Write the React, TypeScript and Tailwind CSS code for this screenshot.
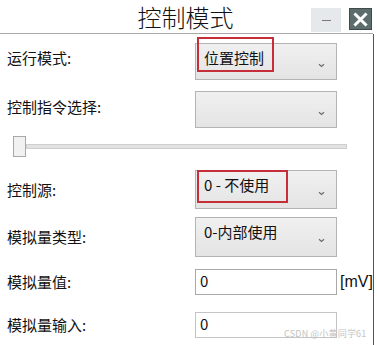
import React from 'react';

function Chevron() {
  return (
    <svg width="7" height="5" viewBox="0 0 7 5" className="absolute right-[11px] top-1/2 mt-[1px]">
      <path d="M1 1.2 L3.5 3.5 L6 1.2" fill="none" stroke="#6b6b6b" strokeWidth="1.2" />
    </svg>
  );
}

function Select({ value, h, mark }: { value?: string; h: string; mark?: string }) {
  return (
    <div className={`relative w-[142px] ${h} border border-[#b4b4b4] bg-gradient-to-b from-[#f0f0f0] to-[#e4e4e4]`}>
      {value && <div className="pl-[8px] pt-[3px] text-[15px] leading-[22px] text-[#111]">{value}</div>}
      <Chevron />
      {mark && <div className={`absolute left-[1px] border-2 border-[#c62f3a] ${mark}`} />}
    </div>
  );
}

function Label({ children, extra = '' }: { children: React.ReactNode; extra?: string }) {
  return <div className={`w-[195px] pl-[7px] text-[15px] text-[#111] ${extra}`}>{children}</div>;
}

export default function App() {
  return (
    <div className="relative w-[377px] h-[345px] bg-white overflow-hidden font-['Noto_Sans_CJK_SC','Liberation_Sans',sans-serif]">
      {/* Header */}
      <div className="relative h-[34px] w-[373px] border-b border-[#a8a8a8] flex items-center justify-center">
        <span className="text-[24px] leading-none font-light text-[#111] -ml-[2px]">控制模式</span>
        <div className="absolute right-[1px] top-[8px] flex items-start gap-[8px]">
          <div className="w-[30px] h-[24px] bg-[#e6e9ec] flex items-center justify-center">
            <div className="w-[9px] h-[1px] bg-[#7a7a7a]" />
          </div>
          <div className="w-[23px] h-[22px] bg-[#5d6d6c] border border-[#3f4a4a] flex items-center justify-center">
            <svg width="15" height="15" viewBox="0 0 15 15">
              <path d="M2.5 2.5 L12.5 12.5 M12.5 2.5 L2.5 12.5" stroke="#fff" strokeWidth="3" strokeLinecap="square" />
            </svg>
          </div>
        </div>
      </div>

      {/* Body */}
      <div className="w-[374px] h-[311px] border-r border-[#555]">
        <div className="flex items-center pt-[9px]">
          <Label extra="-mt-[6px]">运行模式:</Label>
          <Select value="位置控制" h="h-[37px]" mark="-top-[7px] w-[77px] h-[35px]" />
        </div>

        <div className="flex items-center mt-[11px]">
          <Label extra="-mt-[4px]">控制指令选择:</Label>
          <Select h="h-[37px]" />
        </div>

        <div className="flex items-center mt-[8px] pl-[13px] h-[21px]">
          <div className="w-[13px] h-[21px] border border-[#a8a8a8] bg-[#f1f1f1]" />
          <div className="w-[321px] h-[5px] border border-[#cfcfcf] bg-[#e2e2e2]" />
        </div>

        <div className="flex items-center mt-[13px]">
          <Label extra="mt-[2px]">控制源:</Label>
          <Select value="0 - 不使用" h="h-[39px]" mark="-top-[1px] w-[91px] h-[33px]" />
        </div>

        <div className="flex items-center mt-[8px]">
          <Label>模拟量类型:</Label>
          <Select value="0-内部使用" h="h-[40px]" />
        </div>

        <div className="flex items-center mt-[12px]">
          <Label>模拟量值:</Label>
          <div className="w-[142px] h-[26px] border border-[#a9a9a9] bg-white pl-[4px] text-[15px] leading-[22px] text-[#111]">0</div>
          <span className="ml-[3px] text-[16px] text-[#111] font-['Liberation_Sans',sans-serif]">[mV]</span>
        </div>

        <div className="flex items-center mt-[17px]">
          <Label extra="mt-[1px]">模拟量输入:</Label>
          <div className="w-[142px] h-[26px] border border-[#c4c4c4] bg-white pl-[4px] text-[15px] leading-[22px] text-[#111]">0</div>
        </div>
      </div>

      {/* Watermark */}
      <div className="absolute left-[284px] top-[327px] text-[9px] tracking-[0.2px] text-[#c4c4c4] whitespace-nowrap">CSDN @小黄同学61</div>
    </div>
  );
}
